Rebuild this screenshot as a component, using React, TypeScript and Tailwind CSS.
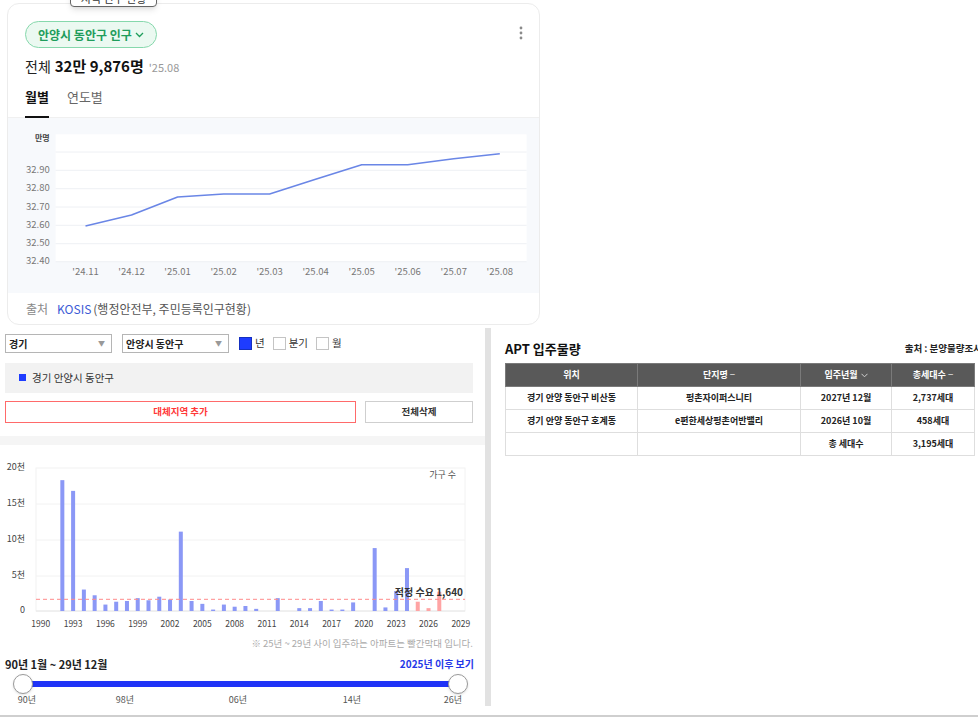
import React from 'react'

// 인구 추이 (만명)
const popPoints = [225, 214, 196, 193, 193, 178.3, 163.7, 163.7, 157.7, 152.7]
const popLabels = ["'24.11", "'24.12", "'25.01", "'25.02", "'25.03", "'25.04", "'25.05", "'25.06", "'25.07", "'25.08"]
const popGrid = [151, 169.3, 187.7, 206, 224.3, 242.7, 260.7]
const popTicks = ['', '32.90', '32.80', '32.70', '32.60', '32.50', '32.40']

// 연도별 입주물량 (천 세대)
const supply: [number, number][] = [
  [1992, 18.3], [1993, 16.8], [1994, 3.0], [1995, 2.2], [1996, 0.9], [1997, 1.3],
  [1998, 1.4], [1999, 1.8], [2000, 1.5], [2001, 2.0], [2002, 1.6], [2003, 11.1],
  [2004, 1.4], [2005, 1.0], [2006, 0.2], [2007, 0.9], [2008, 0.6], [2009, 0.7],
  [2010, 0.3], [2012, 1.8], [2014, 0.4], [2015, 0.4], [2016, 1.4], [2017, 0.2],
  [2018, 0.2], [2019, 1.2], [2021, 8.8], [2022, 0.5], [2023, 2.8], [2024, 6.0],
  [2025, 1.3], [2026, 0.4], [2027, 2.7],
]

const rows = [
  { loc: '경기 안양 동안구 비산동', name: '평촌자이퍼스니티', date: '2027년 12월', total: '2,737세대' },
  { loc: '경기 안양 동안구 호계동', name: 'e편한세상평촌어반밸리', date: '2026년 10월', total: '458세대' },
]

const yearX = (y: number) => 40.8 + (y - 1990) * 10.77
const kToY = (v: number) => 611 - v * 7.15

function PopulationChart() {
  const xs = popPoints.map((_, i) => 85.5 + i * 46.03)
  const d = popPoints.map((y, i) => `${i ? 'L' : 'M'}${xs[i].toFixed(1)} ${y}`).join(' ')
  return (
    <svg width="531" height="175" viewBox="8 117 531 175" className="block">
      <rect x="55.6" y="133.3" width="471" height="127.4" fill="#ffffff" />
      {popGrid.map((y) => (
        <line key={y} x1="55.6" x2="526.6" y1={y} y2={y} stroke="#eef0f4" strokeWidth="1" />
      ))}
      <text x="49.7" y="137.7" textAnchor="end" dominantBaseline="middle" fontSize="8" fontWeight="700" fill="#444">
        만명
      </text>
      {popTicks.map((t, i) =>
        t ? (
          <text key={t} x="49.7" y={popGrid[i]} textAnchor="end" dominantBaseline="middle" fontSize="9.5" fill="#777">
            {t}
          </text>
        ) : null
      )}
      {popLabels.map((l, i) => (
        <text key={l} x={xs[i]} y="271.7" textAnchor="middle" dominantBaseline="middle" fontSize="9.5" fill="#777">
          {l}
        </text>
      ))}
      <path d={d} fill="none" stroke="#6a86e6" strokeWidth="1.6" strokeLinejoin="round" />
    </svg>
  )
}

function SupplyChart() {
  const labelYears = Array.from({ length: 14 }, (_, i) => 1990 + i * 3)
  return (
    <svg width="485" height="186" viewBox="0 446 485 186" className="block">
      <rect x="36" y="468" width="429" height="143" fill="#ffffff" stroke="#f2f2f2" />
      {[504, 540, 576].map((y) => (
        <line key={y} x1="36" x2="465" y1={y} y2={y} stroke="#f2f2f2" />
      ))}
      <line x1="36" x2="465" y1="611" y2="611" stroke="#e6e6e6" />
      {[
        ['20천', 468],
        ['15천', 504],
        ['10천', 540],
        ['5천', 576],
        ['0', 611],
      ].map(([t, y]) => (
        <text key={t} x="25" y={y} textAnchor="end" dominantBaseline="middle" fontSize="9" fill="#444">
          {t}
        </text>
      ))}
      {supply.map(([yr, v]) => (
        <rect
          key={yr}
          x={yearX(yr) - 2}
          y={kToY(v)}
          width="4"
          height={611 - kToY(v)}
          fill={yr >= 2025 ? '#ffa4a4' : '#8b98f6'}
        />
      ))}
      <line x1="36" x2="465" y1="599.3" y2="599.3" stroke="#ff8a8a" strokeDasharray="4 3" />
      <text x="463" y="593" textAnchor="end" dominantBaseline="middle" fontSize="10" fontWeight="600" fill="#333">
        적정 수요 1,640
      </text>
      <text x="456" y="476" textAnchor="end" dominantBaseline="middle" fontSize="9" fill="#555">
        가구 수
      </text>
      {labelYears.map((y) => (
        <text key={y} x={yearX(y)} y="624.5" textAnchor="middle" dominantBaseline="middle" fontSize="8.5" fill="#444">
          {y}
        </text>
      ))}
    </svg>
  )
}

function FakeSelect({ label }: { label: string }) {
  return (
    <div className="w-[107px] h-[19px] border border-[#b5b5b5] bg-white flex items-center justify-between pl-[3px] pr-[6px]">
      <span className="text-[10px] font-bold text-[#222] leading-none">{label}</span>
      <span className="text-[7px] text-[#999] leading-none">▼</span>
    </div>
  )
}

function Check({ label, on }: { label: string; on?: boolean }) {
  return (
    <div className="flex items-center gap-[3px]">
      <div className={on ? 'w-[13px] h-[13px] bg-[#1e3cff] border border-[#1530c0]' : 'w-[13px] h-[13px] bg-white border border-[#c4c4c4]'} />
      <span className="text-[10.5px] text-[#333] leading-none">{label}</span>
    </div>
  )
}

export default function App() {
  return (
    <div className="relative w-[978px] h-[718px] overflow-hidden bg-white font-['Noto_Sans_CJK_KR','Noto_Sans',sans-serif] text-[#222]">
      {/* 위에 떠 있는 툴팁 조각 */}
      <div className="absolute left-[70px] top-[-20px] w-[87px] h-[27px] overflow-hidden bg-white border border-[#666] rounded-[4px] shadow-md flex items-end justify-center pb-[2px] z-10">
        <span className="text-[11px] leading-none text-[#333]">지역 인구 현황</span>
      </div>

      {/* 인구 카드 */}
      <div className="pt-[3px] pl-[7px]">
        <div className="w-[533px] h-[322px] rounded-[12px] border border-[#ececec] bg-white flex flex-col">
          <div className="flex items-start justify-between pt-[17px] pl-[17px] pr-[16px]">
            <div className="h-[27px] px-[12px] rounded-full border border-[#86d8ac] bg-[#ebf9f1] flex items-center gap-[3px]">
              <span className="text-[12px] font-bold text-[#1f9d5c] leading-none">안양시 동안구 인구</span>
              <svg width="9" height="6" viewBox="0 0 9 6" className="mt-[1px]">
                <path d="M1 1l3.5 3.5L8 1" fill="none" stroke="#1f9d5c" strokeWidth="1.3" />
              </svg>
            </div>
            <svg width="4" height="14" viewBox="0 0 4 14" className="mt-[5px]">
              <circle cx="2" cy="2" r="1.4" fill="#8a8a8a" />
              <circle cx="2" cy="7" r="1.4" fill="#8a8a8a" />
              <circle cx="2" cy="12" r="1.4" fill="#8a8a8a" />
            </svg>
          </div>
          <div className="pl-[17px] mt-[7px] h-[20px] flex items-baseline">
            <span className="text-[14px] text-[#222]">전체</span>
            <span className="text-[15px] font-bold text-[#111] ml-[4px]">32만 9,876명</span>
            <span className="text-[11px] text-[#999] ml-[5px]">'25.08</span>
          </div>
          <div className="mt-[13px] pl-[17px] flex gap-[18px] border-b border-[#f0f0f0]">
            <div className="pb-[9px] border-b-2 border-[#111] -mb-px">
              <span className="block text-[13px] leading-[18px] font-bold text-[#111]">월별</span>
            </div>
            <div className="pb-[11px]">
              <span className="block text-[13px] leading-[18px] text-[#666]">연도별</span>
            </div>
          </div>
          <div className="bg-[#f7f9fc]">
            <PopulationChart />
          </div>
          <div className="h-[32px] pl-[18px] flex items-center text-[12px]">
            <span className="text-[#888]">출처</span>
            <span className="text-[#3b5bd6] ml-[9px]">KOSIS</span>
            <span className="text-[#555] ml-[2px]">(행정안전부, 주민등록인구현황)</span>
          </div>
        </div>
      </div>

      {/* 아래 영역 */}
      <div className="flex mt-[3px] h-[378px]">
        {/* 왼쪽: 입주물량 그래프 */}
        <div className="w-[485px] flex flex-col">
          <div className="pt-[6px] pl-[5px] flex items-center">
            <FakeSelect label="경기" />
            <div className="ml-[10px]">
              <FakeSelect label="안양시 동안구" />
            </div>
            <div className="ml-[10px] flex items-center gap-[8px]">
              <Check label="년" on />
              <Check label="분기" />
              <Check label="월" />
            </div>
          </div>
          <div className="ml-[5px] mt-[10px] w-[468px] h-[32px] bg-[#f2f2f2] flex items-center pl-[14px] gap-[6px]">
            <div className="w-[7px] h-[7px] bg-[#1e3cff]" />
            <span className="text-[10.5px] text-[#333] leading-none">경기 안양시 동안구</span>
          </div>
          <div className="ml-[5px] mt-[8px] flex gap-[9px]">
            <div className="w-[351px] h-[22px] border-[1.5px] border-[#ff6a6a] flex items-center justify-center">
              <span className="text-[9.5px] font-bold text-[#ff3838] leading-none">대체지역 추가</span>
            </div>
            <div className="w-[108px] h-[22px] border border-[#cfcfcf] flex items-center justify-center">
              <span className="text-[9.5px] font-bold text-[#333] leading-none">전체삭제</span>
            </div>
          </div>
          <div className="mt-[13px] h-[10px] bg-[#f5f5f5]" />
          <div className="mt-[1px]">
            <SupplyChart />
          </div>
          <div className="mt-[4px] h-[14px] pr-[12px] text-right text-[9.5px] leading-[14px] text-[#aaa]">
            ※ 25년 ~ 29년 사이 입주하는 아파트는 빨간막대 입니다.
          </div>
          <div className="mt-[7px] h-[16px] pl-[5px] pr-[11px] flex items-center justify-between">
            <span className="text-[11px] font-bold text-[#222] leading-none">90년 1월 ~ 29년 12월</span>
            <span className="text-[10px] font-bold text-[#2638e8] leading-none">2025년 이후 보기</span>
          </div>
          <div className="relative mt-[2px] h-[20px]">
            <div className="ml-[23px] mt-[7px] w-[435px] h-[6px] bg-[#1f33f7]" />
            <div className="absolute left-[13px] top-0 w-[20px] h-[20px] rounded-full bg-white border border-[#9a9a9a] shadow-sm" />
            <div className="absolute left-[448px] top-0 w-[20px] h-[20px] rounded-full bg-white border border-[#9a9a9a] shadow-sm" />
          </div>
          <div className="relative h-[14px] mt-[1px] text-[9px] text-[#555] leading-[14px]">
            <span className="absolute left-[27px] -translate-x-1/2">90년</span>
            <span className="absolute left-[125px] -translate-x-1/2">98년</span>
            <span className="absolute left-[238px] -translate-x-1/2">06년</span>
            <span className="absolute left-[352px] -translate-x-1/2">14년</span>
            <span className="absolute left-[453px] -translate-x-1/2">26년</span>
          </div>
        </div>

        {/* 세로 구분 막대 */}
        <div className="w-[6px] bg-[#e2e2e2]" />

        {/* 오른쪽: APT 입주물량 표 */}
        <div className="flex-1 overflow-hidden pl-[14px]">
          <div className="pt-[12px] w-[477px] h-[29px] flex items-center justify-between">
            <span className="text-[13px] font-bold text-[#111] leading-none">APT 입주물량</span>
            <span className="text-[9.5px] font-bold text-[#222] leading-none whitespace-nowrap">출처 : 분양물량조사</span>
          </div>
          <table className="mt-[6px] w-[469px] table-fixed border-collapse text-[9px] font-bold">
            <colgroup>
              <col className="w-[132px]" />
              <col className="w-[163px]" />
              <col className="w-[91px]" />
              <col className="w-[83px]" />
            </colgroup>
            <thead>
              <tr className="h-[23px] bg-[#595959] text-white">
                <th className="border border-[#7a7a7a] font-bold">위치</th>
                <th className="border border-[#7a7a7a] font-bold">
                  단지명 <span className="text-[#c8c8c8]">−</span>
                </th>
                <th className="border border-[#7a7a7a] font-bold">
                  <span className="inline-flex items-center gap-[3px]">
                    입주년월
                    <svg width="7" height="5" viewBox="0 0 7 5">
                      <path d="M0.5 0.8l3 3 3-3" fill="none" stroke="#d0d0d0" strokeWidth="1" />
                    </svg>
                  </span>
                </th>
                <th className="border border-[#7a7a7a] font-bold">
                  총세대수 <span className="text-[#c8c8c8]">−</span>
                </th>
              </tr>
            </thead>
            <tbody className="text-[#222]">
              {rows.map((r) => (
                <tr key={r.name} className="h-[23px]">
                  <td className="border border-[#dedede] text-center">{r.loc}</td>
                  <td className="border border-[#dedede] text-center">{r.name}</td>
                  <td className="border border-[#dedede] text-center">{r.date}</td>
                  <td className="border border-[#dedede] text-center">{r.total}</td>
                </tr>
              ))}
              <tr className="h-[23px]">
                <td className="border border-[#dedede]" />
                <td className="border border-[#dedede]" />
                <td className="border border-[#dedede] text-center">총 세대수</td>
                <td className="border border-[#dedede] text-center">3,195세대</td>
              </tr>
            </tbody>
          </table>
        </div>
      </div>

      {/* 하단 경계선 */}
      <div className="mt-[9px] h-[2px] bg-[#cfcfcf]" />
    </div>
  )
}
